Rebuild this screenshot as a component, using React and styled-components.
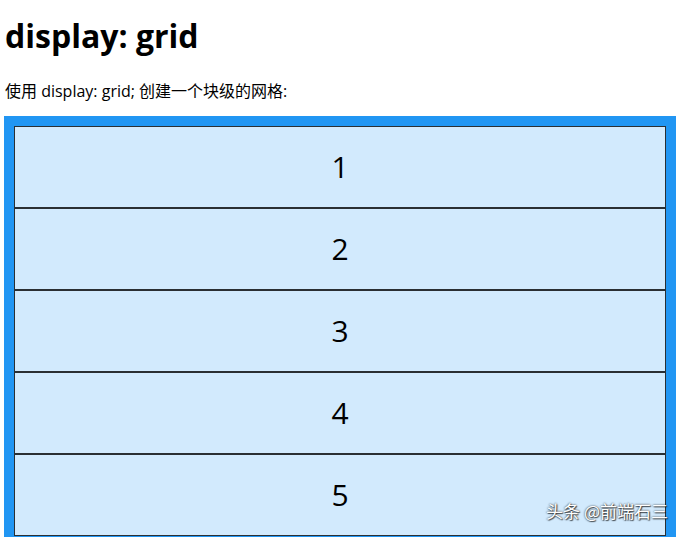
import styled, { createGlobalStyle } from 'styled-components'

const GlobalStyle = createGlobalStyle`
    body {
        margin: 0 4px;
        font-family: "Open Sans", "Noto Sans CJK SC", sans-serif;
        color: #000;
        background: #fff;
    }
`

const Page = styled.div`
    position: relative;
    width: 672px;
    padding-top: 14px;
`

const Title = styled.h1`
    margin: 0 0 0 1px;
    font-size: 32px;
    font-weight: 700;
    line-height: 44px;
`

const Intro = styled.p`
    margin: 22px 0 14px 1px;
    font-size: 16px;
    line-height: 22px;
`

const GridContainer = styled.div`
    display: grid;
    background-color: #2196f3;
    padding: 10px;
`

const GridItem = styled.div`
    background-color: rgba(255, 255, 255, 0.8);
    border: 1px solid rgba(0, 0, 0, 0.8);
    padding: 20px;
    font-size: 30px;
    line-height: 40px;
    text-align: center;
`

const Watermark = styled.div`
    position: absolute;
    right: 8px;
    top: 498px;
    font-family: "Noto Sans CJK SC", sans-serif;
    font-size: 17px;
    color: #fff;
    text-shadow: 0 0 2px rgba(0, 0, 0, 0.9), 1px 1px 1px rgba(0, 0, 0, 0.6);
`

const App = () => {
    const items = [1, 2, 3, 4, 5]

    return ( <>
        <GlobalStyle />
        <Page>
            <Title>display: grid</Title>
            <Intro>使用 display: grid; 创建一个块级的网格:</Intro>
            <GridContainer>
                {items.map(n => <GridItem key={n}>{n}</GridItem>)}
            </GridContainer>
            <Watermark>头条 @前端石三</Watermark>
        </Page>
    </> );
}

export default App;
